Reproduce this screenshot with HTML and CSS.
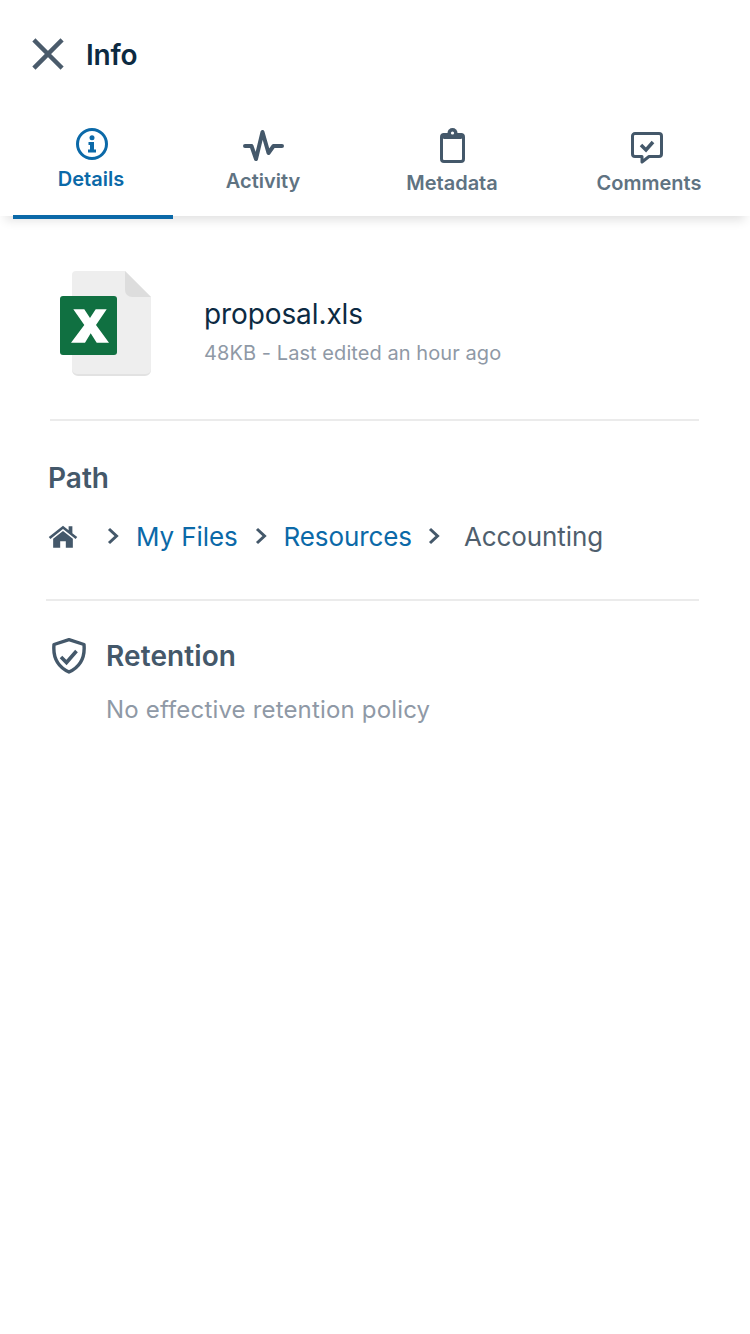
FILE: index.html
```html
<!DOCTYPE html>
<html lang="en">
<head>
<meta charset="utf-8">
<title>Info</title>
<link rel="stylesheet" href="styles.css">
</head>
<body>
<header class="top">
  <svg class="close" width="34" height="34" viewBox="0 0 34 34"><path d="M4.500 4.500 29.500 29.500M29.500 4.500 4.500 29.500" fill="none" stroke="#4a5b6b" stroke-width="4.500" stroke-linecap="square"/></svg>
  <h1 class="title">Info</h1>
</header>
<nav class="tabs">
  <div class="tab tab-details">
    <svg width="34" height="34" viewBox="0 0 34 34"><circle cx="17" cy="17" r="14.500" fill="none" stroke="#0b69a8" stroke-width="3"/><circle cx="17" cy="10.800" r="2.500" fill="#0b69a8"/><path d="M13.500 15h5.500v7.500h2v3h-8v-3h2v-4.500h-1.500z" fill="#0b69a8"/></svg>
    <span>Details</span>
  </div>
  <div class="tab tab-activity">
    <svg width="44" height="34" viewBox="0 0 44 34"><path d="M3 18h6.500L14 31 20.500 4 26.500 25 31.500 18H40" fill="none" stroke="#44586a" stroke-width="4" stroke-linecap="round" stroke-linejoin="round"/></svg>
    <span>Activity</span>
  </div>
  <div class="tab tab-meta">
    <svg width="29" height="36" viewBox="0 0 29 36"><rect x="3.500" y="6.500" width="22" height="27" rx="2.500" fill="none" stroke="#44586a" stroke-width="3"/><rect x="5" y="5" width="19" height="6" rx="1" fill="#44586a"/><circle cx="14.500" cy="5" r="5" fill="#44586a"/><circle cx="14.500" cy="5" r="1.600" fill="#fff"/></svg>
    <span>Metadata</span>
  </div>
  <div class="tab tab-comments">
    <svg class="comment-icon" width="34" height="34" viewBox="0 0 34 34"><path d="M5 3.500h24a2.500 2.500 0 0 1 2.500 2.500v18a2.500 2.500 0 0 1-2.500 2.500H19l-7 5.500v-5.500H5A2.500 2.500 0 0 1 2.500 24V6A2.500 2.500 0 0 1 5 3.500z" fill="none" stroke="#44586a" stroke-width="3" stroke-linejoin="round"/><path d="M11 15l5 5 7-8" fill="none" stroke="#44586a" stroke-width="3.500"/></svg>
    <span>Comments</span>
  </div>
</nav>
<main class="content">
  <section class="file">
    <svg class="file-icon" width="92" height="106" viewBox="0 0 92 106">
      <path d="M16 0h49l26 26v73a5 5 0 0 1-5 5H17a5 5 0 0 1-5-5V4a4 4 0 0 1 4-4z" fill="#eeeeee"/>
      <path d="M12 98v1a6 6 0 0 0 6 6h67a6 6 0 0 0 6-6v-1a5 5 0 0 1-5 5H17a5 5 0 0 1-5-5z" fill="#e2e2e2"/>
      <path d="M65 0l26 26H72a7 7 0 0 1-7-7z" fill="#dddddd"/>
      <rect x="0" y="25" width="57" height="59" rx="3" fill="#107041"/>
      <path d="M13.300 38.300H24.300L30 47 35.700 38.300H46.700L36 54 49 71.700H36.700L30.700 62.300 25 71.700H11L24.300 54Z" fill="#fff"/>
    </svg>
    <div class="file-info">
      <div class="file-name">proposal.xls</div>
      <div class="file-meta">48KB - Last edited an hour ago</div>
    </div>
  </section>
  <hr class="rule rule-a">
  <h2 class="path-head">Path</h2>
  <div class="crumbs">
    <svg class="home" width="30" height="23" viewBox="0 0 32 24"><path d="M16 0.500 0.800 12.500l1.800 2.200L16 4l13.400 10.700 1.800-2.200-5.200-4V1h-4v4.300z" fill="#44586a"/><path d="M16 6 5.500 14.400V24H13v-7h6v7h7.500v-9.600z" fill="#44586a"/></svg>
    <svg class="chev chev-1" width="12" height="18" viewBox="0 0 12 18"><path d="M2 2l7.500 7L2 16" fill="none" stroke="#44586a" stroke-width="3"/></svg>
    <span class="link">My Files</span>
    <svg class="chev chev-2" width="12" height="18" viewBox="0 0 12 18"><path d="M2 2l7.500 7L2 16" fill="none" stroke="#44586a" stroke-width="3"/></svg>
    <span class="link">Resources</span>
    <svg class="chev chev-3" width="12" height="18" viewBox="0 0 12 18"><path d="M2 2l7.500 7L2 16" fill="none" stroke="#44586a" stroke-width="3"/></svg>
    <span class="current">Accounting</span>
  </div>
  <hr class="rule rule-b">
  <div class="ret-head">
    <svg width="36" height="36" viewBox="0 0 36 36"><path d="M18 1.700 33 6.500c1 11-2 21.500-15 27.500C5 28 2 17.500 3 6.500z" fill="none" stroke="#44586a" stroke-width="3.400" stroke-linejoin="round"/><path d="M10 19l5.500 5.500 10-11.500" fill="none" stroke="#44586a" stroke-width="3.600"/></svg>
    <h2 class="ret-title">Retention</h2>
  </div>
  <p class="ret-note">No effective retention policy</p>
</main>
</body>
</html>
```
FILE: styles.css
```css
html, body {
  margin: 0;
  padding: 0;
  background: #fff;
}
body {
  width: 750px;
  height: 1334px;
  overflow: hidden;
  font-family: Inter, "Noto Sans", sans-serif;
  color: #44586a;
}
.top {
  display: flex;
  align-items: center;
  height: 108px;
  padding-left: 31px;
  box-sizing: border-box;
}
.close { flex: none; }
.title {
  margin: 1px 0 0 21px;
  font-size: 28px;
  font-weight: 600;
  color: #0c2a42;
  letter-spacing: -0.2px;
}
.tabs {
  display: flex;
  height: 108px;
  padding-left: 13px;
  box-sizing: border-box;
  box-shadow: 0 9px 10px -5px rgba(0, 0, 0, 0.12);
  position: relative;
}
.tab {
  display: flex;
  flex-direction: column;
  align-items: center;
  flex: none;
  box-sizing: border-box;
  font-size: 20px;
  font-weight: 600;
  line-height: 24px;
  color: #5f7382;
}
.tab svg { display: block; }
.tab-details {
  width: 160px;
  height: 111px;
  padding: 19px 4px 0 0;
  gap: 6px;
  color: #0b69a8;
  border-bottom: 4px solid #0b69a8;
}
.tab-details svg { margin-left: 2px; }
.tab-activity {
  width: 180px;
  padding-top: 20px;
  gap: 7px;
}
.tab-activity svg { margin-left: 2px; }
.tab-meta {
  width: 198px;
  padding-top: 20px;
  gap: 7px;
}
.tab-comments {
  width: 196px;
  padding-top: 22px;
  gap: 7px;
}
.tab-comments .comment-icon { margin-right: 5px; }
.content {
  padding-top: 55px;
}
.file {
  display: flex;
  align-items: center;
  padding-left: 60px;
}
.file-icon { flex: none; }
.file-info {
  margin-left: 52px;
  padding-top: 15px;
}
.file-name {
  font-size: 28px;
  line-height: 34px;
  color: #0c2a42;
  letter-spacing: -0.1px;
}
.file-meta {
  margin-top: 9px;
  font-size: 20px;
  line-height: 26px;
  color: #8f99a6;
  letter-spacing: 0.07px;
}
.rule {
  border: 0;
  border-top: 2px solid #ebebeb;
  margin: 0 51px 0 50px;
}
.rule-a { margin-top: 42px; }
.rule-b { margin: 45px 51px 0 46px; }
.path-head {
  margin: 40px 0 0 48px;
  font-size: 28px;
  line-height: 34px;
  font-weight: 600;
}
.crumbs {
  display: flex;
  align-items: center;
  height: 36px;
  margin-top: 23px;
  padding-left: 48px;
  font-size: 26px;
  letter-spacing: -0.1px;
}
.home { flex: none; }
.chev { flex: none; }
.chev-1 { margin: 0 17px 0 29px; }
.chev-2 { margin: 0 17px 0 17px; }
.chev-3 { margin: 0 24px 0 16px; }
.link { color: #0b69a8; }
.current { color: #4f5f6e; }
.ret-head {
  display: flex;
  align-items: center;
  margin-top: 37px;
  padding-left: 51px;
}
.ret-title {
  margin: 0 0 0 19px;
  font-size: 28px;
  line-height: 36px;
  font-weight: 600;
  letter-spacing: 0.1px;
}
.ret-note {
  margin: 21px 0 0 106px;
  font-size: 24px;
  line-height: 30px;
  color: #8f99a6;
  letter-spacing: 0.17px;
}
```
